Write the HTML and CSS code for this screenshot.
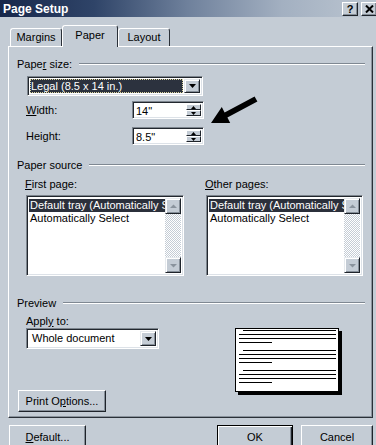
FILE: index.html
```html
<!DOCTYPE html>
<html>
<head>
<meta charset="utf-8">
<link rel="stylesheet" href="styles.css">
</head>
<body>
<div class="titlebar">
  <span class="title">Page Setup</span>
  <div class="tbtns">
    <span class="tbtn">?</span>
    <span class="tbtn"><svg width="9" height="8" viewBox="0 0 9 8"><path d="M1 0.5 L8 7.5 M8 0.5 L1 7.5" stroke="#000" stroke-width="2"/></svg></span>
  </div>
</div>

<div class="tabs">
  <div class="tab t-margins">Margins</div>
  <div class="tab sel t-paper">Paper</div>
  <div class="tab t-layout">Layout</div>
</div>

<div class="panel">
  <div class="group g-size"><span>Pape<u>r</u> size:</span><i class="rule"></i></div>

  <div class="combo c-size">
    <div class="val hl">Legal (8.5 x 14 in.)</div>
    <div class="drop"><svg width="7" height="4" viewBox="0 0 7 4"><path d="M0 0 H7 L3.5 4 Z" fill="#000"/></svg></div>
  </div>

  <div class="field r-width">
    <label><u>W</u>idth:</label>
    <div class="spin">
      <span class="sval">14"</span>
      <div class="sbtns">
        <b><svg width="5" height="3" viewBox="0 0 5 3"><path d="M0 3 H5 L2.5 0 Z" fill="#000"/></svg></b>
        <b><svg width="5" height="3" viewBox="0 0 5 3"><path d="M0 0 H5 L2.5 3 Z" fill="#000"/></svg></b>
      </div>
    </div>
  </div>

  <div class="field r-height">
    <label>Hei<u>g</u>ht:</label>
    <div class="spin">
      <span class="sval">8.5"</span>
      <div class="sbtns">
        <b><svg width="5" height="3" viewBox="0 0 5 3"><path d="M0 3 H5 L2.5 0 Z" fill="#000"/></svg></b>
        <b><svg width="5" height="3" viewBox="0 0 5 3"><path d="M0 0 H5 L2.5 3 Z" fill="#000"/></svg></b>
      </div>
    </div>
  </div>

  <div class="group g-source"><span>Paper source</span><i class="rule"></i></div>

  <div class="sources">
    <div class="lbl"><u>F</u>irst page:</div>
    <div class="lbl"><u>O</u>ther pages:</div>
    <div class="list">
      <div class="items">
        <div class="item hl">Default tray (Automatically Select)</div>
        <div class="item">Automatically Select</div>
      </div>
      <div class="sbar">
        <b class="sb"><svg width="7" height="5" viewBox="0 0 7 5"><path d="M0 4 H7 L3.5 0.5 Z" fill="#8a939d"/></svg></b>
        <b class="sb"><svg width="7" height="5" viewBox="0 0 7 5"><path d="M0 1 H7 L3.5 4.5 Z" fill="#8a939d"/></svg></b>
      </div>
    </div>
    <div class="list">
      <div class="items">
        <div class="item hl">Default tray (Automatically Select)</div>
        <div class="item">Automatically Select</div>
      </div>
      <div class="sbar">
        <b class="sb"><svg width="7" height="5" viewBox="0 0 7 5"><path d="M0 4 H7 L3.5 0.5 Z" fill="#8a939d"/></svg></b>
        <b class="sb"><svg width="7" height="5" viewBox="0 0 7 5"><path d="M0 1 H7 L3.5 4.5 Z" fill="#8a939d"/></svg></b>
      </div>
    </div>
  </div>

  <div class="group g-preview"><span>Preview</span><i class="rule"></i></div>

  <div class="prow">
    <div class="pleft">
      <div class="lbl apply">Appl<u>y</u> to:</div>
      <div class="combo c-apply">
        <div class="val">Whole document</div>
        <div class="drop"><svg width="7" height="4" viewBox="0 0 7 4"><path d="M0 0 H7 L3.5 4 Z" fill="#000"/></svg></div>
      </div>
      <div class="btn b-print">Print O<u>p</u>tions...</div>
    </div>
    <div class="page">
      <div class="pg"><i class="ln first"></i><i class="ln"></i><i class="ln"></i><i class="ln short"></i></div>
      <div class="pg"><i class="ln first"></i><i class="ln"></i><i class="ln"></i><i class="ln short"></i></div>
      <div class="pg"><i class="ln first"></i><i class="ln"></i><i class="ln"></i><i class="ln short"></i></div>
    </div>
  </div>
</div>

<div class="buttons">
  <div class="btn b-default"><u>D</u>efault...</div>
  <div class="btn b-ok def">OK</div>
  <div class="btn b-cancel">Cancel</div>
</div>

<svg class="arrow" width="376" height="445" viewBox="0 0 376 445">
  <polygon points="211,123 221.8,107.1 224.6,112.4 254.6,96.4 257.4,101.6 227.4,117.6 230.2,122.9" fill="#000"/>
</svg>
</body>
</html>
```

FILE: styles.css
```css
html, body {
  margin: 0;
  padding: 0;
}
body {
  width: 376px;
  height: 445px;
  overflow: hidden;
  position: relative;
  background: #c4ccd5;
  font: 11px "Liberation Sans", Arial, sans-serif;
  color: #000;
}
u { text-decoration: underline; text-underline-offset: 1px; }

/* title bar */
.titlebar {
  height: 17px;
  display: flex;
  align-items: center;
  justify-content: space-between;
  padding-left: 3px;
  background: linear-gradient(90deg, #17274a 0%, #2f4468 25%, #6f819c 50%, #a3b0c1 75%, #bcc6d1 100%);
}
.title {
  color: #fff;
  font-weight: bold;
  font-size: 12px;
}
.tbtns {
  display: flex;
  gap: 3px;
  align-self: flex-start;
  margin-top: 2px;
  margin-right: -1px;
}
.tbtn {
  box-sizing: border-box;
  width: 16px;
  height: 14px;
  background: #c4ccd5;
  border: 1px solid;
  border-color: #fff #1e232a #1e232a #fff;
  box-shadow: inset -1px -1px #858e98;
  display: flex;
  align-items: center;
  justify-content: center;
  font-weight: bold;
  font-size: 11px;
}

/* tabs */
.tabs {
  display: flex;
  align-items: flex-end;
  height: 21px;
  margin-top: 8px;
  padding-left: 10px;
}
.tab {
  box-sizing: border-box;
  height: 18px;
  border: 1px solid;
  border-bottom: none;
  border-color: #fff #2a3038 transparent #fff;
  border-radius: 3px 3px 0 0;
  display: flex;
  align-items: center;
  justify-content: center;
  padding-bottom: 1px;
}
.t-margins { width: 52px; }
.t-paper { width: 56px; }
.t-layout { width: 52px; }
.tab.sel {
  height: 22px;
  margin-bottom: -1px;
  background: #c4ccd5;
  position: relative;
  z-index: 1;
  padding-bottom: 3px;
}

/* panel */
.panel {
  box-sizing: border-box;
  margin-left: 8px;
  width: 365px;
  height: 372px;
  border: 1px solid;
  border-color: #fff #2a3038 #2a3038 #fff;
  box-shadow: inset -1px -1px #8a939d;
}
.group {
  display: flex;
  align-items: center;
  gap: 7px;
  height: 13px;
  padding: 0 7px 0 8px;
}
.rule {
  flex: 1;
  height: 0;
  border-top: 1px solid #7f8892;
  border-bottom: 1px solid #fff;
}
.g-size { margin-top: 10px; }
.g-source { margin-top: 13px; }
.g-preview { margin-top: 20px; }

/* combo */
.combo {
  box-sizing: border-box;
  display: flex;
  background: #fff;
  border: 1px solid;
  border-color: #7d858e #fff #fff #7d858e;
  box-shadow: inset 1px 1px #22272e, inset -1px -1px #dde2e8;
  padding: 2px;
}
.combo .val {
  flex: 1;
  line-height: 14px;
  padding-left: 1px;
  white-space: nowrap;
  overflow: hidden;
}
.val.hl {
  background: #2c323e;
  color: #fff;
  outline: 1px dotted #d9d3a0;
  outline-offset: -1px;
  margin-right: 1px;
}
.drop {
  box-sizing: border-box;
  width: 16px;
  background: #c4ccd5;
  border: 1px solid;
  border-color: #e6eaee #1e232a #1e232a #e6eaee;
  box-shadow: inset 1px 1px #fff, inset -1px -1px #858e98;
  display: flex;
  align-items: center;
  justify-content: center;
}
.c-size {
  margin: 6px 0 0 18px;
  width: 176px;
  height: 20px;
}
.c-apply {
  margin-left: 8px;
  width: 133px;
  height: 21px;
}
.c-apply .val {
  padding-left: 3px;
  line-height: 15px;
}

/* spin fields */
.field {
  display: flex;
  align-items: center;
  height: 18px;
  padding-left: 17px;
}
.field label {
  width: 106px;
}
.r-width { margin-top: 5px; }
.r-height { margin-top: 8px; }
.spin {
  box-sizing: border-box;
  width: 72px;
  height: 18px;
  display: flex;
  background: #fff;
  border: 1px solid;
  border-color: #7d858e #fff #fff #7d858e;
  box-shadow: inset 1px 1px #22272e, inset -1px -1px #dde2e8;
  padding: 2px;
}
.sval {
  flex: 1;
  line-height: 14px;
  padding-left: 1px;
}
.sbtns {
  width: 15px;
  display: flex;
  flex-direction: column;
}
.sbtns b {
  box-sizing: border-box;
  flex: 1;
  background: #c4ccd5;
  border: 1px solid;
  border-color: #fff #1e232a #1e232a #fff;
  display: flex;
  align-items: center;
  justify-content: center;
}

/* paper source */
.sources {
  display: grid;
  grid-template-columns: 159px 158px;
  column-gap: 21px;
  row-gap: 4px;
  padding-left: 16px;
  margin-top: 7px;
}
.lbl {
  height: 13px;
  line-height: 13px;
}
.list {
  box-sizing: border-box;
  height: 81px;
  display: flex;
  background: #fff;
  border: 1px solid;
  border-color: #7d858e #fff #fff #7d858e;
  box-shadow: inset 1px 1px #22272e, inset -1px -1px #dde2e8;
  padding: 2px;
  margin-left: 1px;
}
.items {
  flex: 1;
  overflow: hidden;
  padding-top: 1px;
}
.item {
  height: 13px;
  line-height: 13px;
  white-space: nowrap;
  overflow: hidden;
  padding-left: 1px;
}
.item.hl {
  background: #2b303b;
  color: #fff;
}
.sbar {
  width: 16px;
  display: flex;
  flex-direction: column;
  justify-content: space-between;
  background: repeating-conic-gradient(#c4ccd5 0 25%, #fff 0 50%) 0 0 / 2px 2px;
}
.sb {
  box-sizing: border-box;
  height: 16px;
  background: #c4ccd5;
  border: 1px solid;
  border-color: #e6eaee #1e232a #1e232a #e6eaee;
  box-shadow: inset 1px 1px #fff, inset -1px -1px #858e98;
  display: flex;
  align-items: center;
  justify-content: center;
}

/* preview */
.prow {
  display: flex;
  margin-top: 6px;
}
.pleft {
  box-sizing: border-box;
  width: 226px;
  padding-left: 9px;
}
.apply {
  margin-left: 8px;
}
.b-print {
  margin-top: 41px;
  width: 88px;
  height: 22px;
}
.page {
  box-sizing: border-box;
  margin-top: 13px;
  width: 104px;
  height: 64px;
  background: #fff;
  border: 1px solid #000;
  box-shadow: 3px 3px 0 #000;
  padding: 1px 2px 0 3px;
}
.pg + .pg { margin-top: 7px; }
.ln {
  display: block;
  height: 1px;
  background: #000;
}
.ln + .ln { margin-top: 3px; }
.ln.first { margin-left: 4px; }
.ln.short { width: 33px; }

/* buttons */
.btn {
  box-sizing: border-box;
  height: 22px;
  background: #c4ccd5;
  border: 1px solid;
  border-color: #fff #1e232a #1e232a #fff;
  box-shadow: inset -1px -1px #858e98;
  display: flex;
  align-items: center;
  justify-content: center;
}
.btn.def {
  border-color: #000;
  box-shadow: inset 1px 1px #fff, inset -1px -1px #1e232a, inset -2px -2px #858e98;
}
.buttons {
  display: flex;
  gap: 8px;
  margin-top: 7px;
  padding: 0 3px 0 9px;
}
.buttons .btn { height: 23px; }
.b-default { width: 77px; }
.b-ok { width: 76px; margin-left: auto; }
.b-cancel { width: 72px; }

.arrow {
  position: absolute;
  left: 0;
  top: 0;
  pointer-events: none;
}
```
